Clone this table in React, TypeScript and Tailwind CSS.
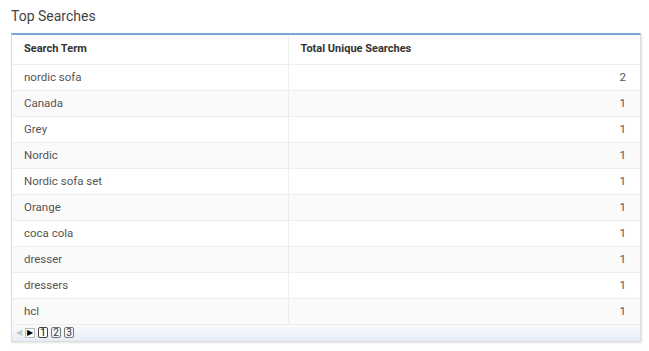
const rows: [string, number][] = [
  ['nordic sofa', 2],
  ['Canada', 1],
  ['Grey', 1],
  ['Nordic', 1],
  ['Nordic sofa set', 1],
  ['Orange', 1],
  ['coca cola', 1],
  ['dresser', 1],
  ['dressers', 1],
  ['hcl', 1],
];

export default function App() {
  return (
    <div className="w-[649px] h-[351px] bg-white pt-[8px] pl-[11px] pr-[8px]" style={{ fontFamily: 'Roboto, "Liberation Sans", sans-serif' }}>
      <h2 className="text-[14px] leading-[17px] text-[#444] font-normal">Top Searches</h2>

      <div className="mt-[8px] border-t-2 border-t-[#7ea4d6] border-x border-b border-x-[#dcdcdc] border-b-[#dcdcdc] shadow-[1px_1px_2px_rgba(0,0,0,0.12)]">
        <table className="w-full border-collapse text-[11px]">
          <thead>
            <tr className="h-[29px] border-b border-[#eeeeee]">
              <th className="w-[276px] text-left pl-[12px] font-bold text-[#333] border-r border-[#eeeeee]">Search Term</th>
              <th className="text-left pl-[12px] font-bold text-[#333]">Total Unique Searches</th>
            </tr>
          </thead>
          <tbody>
            {rows.map(([term, n], i) => (
              <tr key={term} className={`h-[26px] border-b border-[#eeeeee] ${i % 2 === 1 ? 'bg-[#fafafa]' : 'bg-white'}`}>
                <td className="pl-[12px] pt-[1px] text-[#555] text-[11.5px] border-r border-[#eeeeee]">{term}</td>
                <td className="pr-[14px] pt-[1px] text-right text-[#555] text-[11.5px]">{n}</td>
              </tr>
            ))}
          </tbody>
        </table>

        {/* pager */}
        <div className="h-[16px] flex items-center pl-[2px] bg-gradient-to-b from-[#f9fafd] to-[#e8edf7] text-[10px] leading-none">
          <span className="w-[10px] h-[10px] flex items-center justify-center text-[#c8c8c8] text-[8px]">◀</span>
          <span className="ml-[1px] w-[10px] h-[10px] flex items-center justify-center border border-[#bbb] bg-white text-black text-[8px]">▶</span>
          <div className="ml-[3px] flex gap-[3px]">
            <span className="w-[10px] h-[11px] flex items-center justify-center border border-[#444] rounded-[2px] bg-white text-black">1</span>
            <span className="w-[10px] h-[11px] flex items-center justify-center border border-[#777] rounded-[2px] text-[#333]">2</span>
            <span className="w-[10px] h-[11px] flex items-center justify-center border border-[#777] rounded-[2px] text-[#333]">3</span>
          </div>
        </div>
      </div>
    </div>
  );
}
